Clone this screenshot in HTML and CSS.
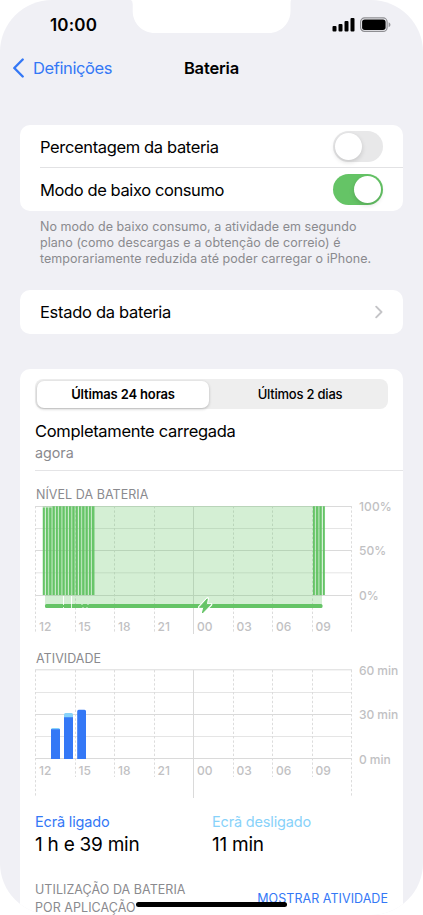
FILE: index.html
```html
<!DOCTYPE html>
<html lang="pt">
<head>
<meta charset="utf-8">
<title>Bateria</title>
<link rel="stylesheet" href="styles.css">
</head>
<body>
<div class="phone">
  <svg class="notch" width="160" height="33" viewBox="0 0 160 33"><path d="M0 0Q1.700 1 1.700 4V11C1.700 23 11 33 24 33H138C150 33 159.500 23 159.500 11V4Q159.500 1 160 0Z" fill="#fff"/></svg>
  <header class="status">
    <span class="time">10:00</span>
    <span class="status-icons">
      <svg width="23" height="16" viewBox="0 0 23 16"><rect x="0.500" y="9" width="4" height="5.500" rx="1"/><rect x="6.500" y="7" width="4" height="7.500" rx="1"/><rect x="12.500" y="4" width="4" height="10.500" rx="1"/><rect x="18.500" y="1" width="4" height="13.500" rx="1"/></svg>
      <svg width="31" height="16" viewBox="0 0 31 16"><rect x=".6" y=".9" width="26.500" height="13.500" rx="4" fill="none" stroke="#8e8e92" stroke-width="1.200"/><rect x="2.100" y="2.400" width="23.500" height="10.500" rx="2.600"/><path d="M28.600 5.200Q30.500 6 30.500 7.700T28.600 10.200Z" fill="#98989c"/></svg>
    </span>
  </header>
  <nav class="nav">
    <a class="back"><svg width="12" height="20" viewBox="0 0 12 20"><path d="M10.700 1.500L2.300 10L10.700 18.500" fill="none" stroke="#3478f6" stroke-width="2.400" stroke-linecap="round" stroke-linejoin="round"/></svg><span>Definições</span></a>
    <h1>Bateria</h1>
  </nav>
  <main>
    <section class="card toggles">
      <div class="row"><span>Percentagem da bateria</span><i class="switch"></i></div>
      <div class="row"><span>Modo de baixo consumo</span><i class="switch on"></i></div>
    </section>
    <p class="note">No modo de baixo consumo, a atividade em segundo<br>plano (como descargas e a obtenção de correio) é<br>temporariamente reduzida até poder carregar o iPhone.</p>
    <section class="card link">
      <div class="row"><span>Estado da bateria</span><svg width="8" height="14" viewBox="0 0 8 14"><path d="M1.200 1.700L6.500 7L1.200 12.300" fill="none" stroke="#c4c4c7" stroke-width="1.900" stroke-linecap="round" stroke-linejoin="round"/></svg></div>
    </section>
    <section class="card usage">
      <div class="tabs"><span class="tab active">Últimas 24 horas</span><span class="tab">Últimos 2 dias</span></div>
      <div class="charge"><div class="title">Completamente carregada</div><div class="sub">agora</div></div>
      <h2 class="level-title">NÍVEL DA BATERIA</h2>
      <svg class="chart" width="368" height="139" viewBox="35 498 368 139">
        <defs>
          <pattern id="bars" x="42.600" y="0" width="3.300" height="10" patternUnits="userSpaceOnUse"><rect width="2.300" height="10" fill="#65c466"/></pattern>
          <pattern id="bars9" x="312.800" y="0" width="3.300" height="10" patternUnits="userSpaceOnUse"><rect width="2.300" height="10" fill="#65c466"/></pattern>
        </defs>
        <path class="line" d="M35 506.500H352M35 550.500H352M35 595.500H352"/>
        <path class="line faint" d="M35 528.500H352M35 572.800H352"/>
        <path class="dash" d="M35.500 506V633M75.500 506V633M114.500 506V633M154.500 506V633M233.500 506V633M272.500 506V633M312.500 506V633M351.500 506V633"/>
        <path class="line" d="M193.500 506V634"/>
        <path class="wash" d="M42.600 506H322V606H45V595H42.600Z"/>
        <path d="M42.600 507.500H52V506.200H95V595H42.600Z" fill="url(#bars)"/>
        <rect x="312.800" y="506.200" width="12.300" height="88.800" fill="url(#bars9)"/>
        <path d="M63.500 596V604M71.500 596V604" stroke="#fff" stroke-width="1"/>
        <rect x="45" y="604" width="277.500" height="4" rx="1.500" fill="#65c466"/>
        <path d="M63.500 604V605M63.500 607V608M71.500 604V608M82 604V605M88 604V605M83 607V608M87 607V608" stroke="#e1f4e1" stroke-width="1"/>
        <path d="M207.700 598.500L199.300 607.300H203.800L202.300 613.300L211 604.400H206.400Z" fill="#fff" stroke="#fff" stroke-width="2.800" stroke-linejoin="round"/>
        <path d="M207.300 598.800L199.500 607.300H203.800L202.400 613L210.800 604.400H206.400Z" fill="#65c466" stroke="#65c466" stroke-width="1" stroke-linejoin="round"/>
        <g class="tick"><text x="39" y="631">12</text><text x="78.500" y="631">15</text><text x="118" y="631">18</text><text x="157.500" y="631">21</text><text x="197" y="631">00</text><text x="236.500" y="631">03</text><text x="276" y="631">06</text><text x="315.500" y="631">09</text><text x="359" y="510.500">100%</text><text x="359" y="555">50%</text><text x="359" y="599.500">0%</text></g>
      </svg>
      <h2 class="activity-title">ATIVIDADE</h2>
      <svg class="chart" width="368" height="139" viewBox="35 661 368 139">
        <path class="line" d="M35 714.500H352M35 758.500H352M35 669.800H352"/>
        <path class="line faint" d="M35 692.500H352M35 736.500H352"/>
        <path class="dash" d="M35.500 670V797M75.500 670V777M114.500 670V777M154.500 670V777M233.500 670V777M272.500 670V777M312.500 670V777M351.500 670V797"/>
        <path class="line" d="M193.500 670V798"/>
        <path d="M51 759V729.500Q51 728 52.500 728H58.500Q60 728 60 729.500V759ZM64 759V714.500Q64 713 65.500 713H71.500Q73 713 73 714.500V759Z" fill="#87d2fa"/>
        <path d="M51 759V729.200H60V759ZM64 759V717.200H73V759ZM77.200 759V711.200Q77.200 709.700 78.700 709.700H84.500Q86 709.700 86 711.200V759Z" fill="#3478f6"/>
        <g class="tick"><text x="39" y="775">12</text><text x="78.500" y="775">15</text><text x="118" y="775">18</text><text x="157.500" y="775">21</text><text x="197" y="775">00</text><text x="236.500" y="775">03</text><text x="276" y="775">06</text><text x="315.500" y="775">09</text></g>
        <g class="tick minutes"><text x="359" y="674.500">60 min</text><text x="359" y="719">30 min</text><text x="359" y="763.500">0 min</text></g>
      </svg>
      <div class="totals">
        <div class="total"><div class="label on-label">Ecrã ligado</div><div class="value">1 h e 39 min</div></div>
        <div class="total"><div class="label off-label">Ecrã desligado</div><div class="value">11 min</div></div>
      </div>
      <div class="apps"><span class="apps-title">UTILIZAÇÃO DA BATERIA<br>POR APLICAÇÃO</span><a>MOSTRAR ATIVIDADE</a></div>
    </section>
  </main>
  <div class="home"></div>
</div>
</body>
</html>
```
FILE: styles.css
```css
* { box-sizing: border-box; }
body { margin: 0; background: #fff; font-family: Inter, "Liberation Sans", sans-serif; color: #000; }
h1, h2, p { margin: 0; }
svg { display: block; flex: none; }
.phone { position: relative; width: 423px; height: 915px; overflow: hidden; background: #f0f0f5; border-radius: 52px; white-space: nowrap; }
.notch { position: absolute; top: 0; left: 131px; }
.status { height: 48px; padding: 2px 32px 0 50px; display: flex; align-items: center; justify-content: space-between; }
.time { font-size: 17px; font-weight: 600; letter-spacing: .15px; }
.status-icons { display: flex; gap: 5px; }
.nav { height: 77px; padding: 0 12px; display: grid; grid-template-columns: 1fr auto 1fr; align-items: start; line-height: 40px; }
.back { display: flex; align-items: center; gap: 9px; color: #3478f6; font-size: 16.500px; letter-spacing: -.4px; }
h1 { font-size: 16.500px; font-weight: 600; letter-spacing: -.15px; }
main { padding: 0 20px; }
.card { background: #fff; border-radius: 10px; }
.row { height: 43px; padding: 0 20px; display: flex; align-items: center; justify-content: space-between; font-size: 16.500px; letter-spacing: -.36px; }
.toggles { height: 86px; }
.toggles .row:first-child { height: 42px; padding-top: 1px; }
.toggles .row + .row { height: 44px; letter-spacing: -.4px; background: linear-gradient(#e2e2e4, #e2e2e4) 20px 0 / 100% 1px no-repeat; }
.toggles .row + .row span { padding-top: 2px; }
.switch { width: 50px; height: 31px; border-radius: 16px; background: #e8e8e9; padding: 2px; display: flex; }
.switch::before { content: ""; width: 27px; height: 27px; border-radius: 50%; background: #fff; box-shadow: 0 2px 5px rgba(0,0,0,.15); }
.switch.on { background: #65c466; justify-content: flex-end; }
.note { padding: 8px 20px 0; height: 79px; font-size: 12.500px; line-height: 16px; letter-spacing: .05px; color: #8a8a8e; }
.link { height: 44px; margin-bottom: 35px; }
.link .row { height: 44px; letter-spacing: -.3px; }
.usage { height: 580px; padding: 10px 0 0 15px; border-radius: 10px 10px 0 0; }
.tabs { width: 353px; height: 30px; padding: 2px; display: grid; grid-template-columns: 172px 1fr; background: #eee; border-radius: 8px; font-size: 13px; line-height: 27px; }
.tab { text-align: center; font-weight: 500; letter-spacing: -.22px; padding-left: 5px; }
.tab.active { background: #fff; border-radius: 7px; font-weight: 600; letter-spacing: -.15px; padding: 0; box-shadow: 0 1px 3px rgba(0,0,0,.25); }
.charge { height: 62px; padding-top: 10px; border-bottom: 1px solid #e4e4e6; }
.title { font-size: 16.500px; line-height: 24px; letter-spacing: -.32px; }
.sub { font-size: 14.300px; line-height: 20px; color: #8a8a8e; }
h2 { font-size: 12.500px; font-weight: 400; letter-spacing: .05px; color: #8a8a8e; }
.level-title, .activity-title { padding-left: 1px; line-height: 18px; }
.level-title { height: 27px; padding-top: 15px; }
.activity-title { height: 24px; padding-top: 13px; }
.chart { overflow: visible; }
.line { stroke: #dadada; fill: none; }
.faint { stroke: #e5e5e5; }
.dash { stroke: #dcdcdc; stroke-dasharray: 2.400 2; fill: none; }
.wash { fill: #65c466; fill-opacity: .28; }
.tick { fill: #c1c1c3; font-size: 12px; font-weight: 500; letter-spacing: .1px; }
.minutes { letter-spacing: -.05px; }
.totals { display: grid; grid-template-columns: 177px 1fr; padding-top: 12px; }
.label { font-size: 14.500px; line-height: 20px; letter-spacing: -.17px; }
.value { font-size: 19px; line-height: 26px; letter-spacing: -.25px; }
.on-label { color: #3478f6; }
.off-label { color: #87d2fa; }
.apps { padding: 23px 15px 0 0; display: flex; align-items: center; justify-content: space-between; font-size: 12.500px; line-height: 18px; letter-spacing: .05px; color: #8a8a8e; }
.apps a { color: #3478f6; }
.home { position: absolute; left: 136px; bottom: 8px; width: 151px; height: 5px; border-radius: 3px; background: #000; }
```
